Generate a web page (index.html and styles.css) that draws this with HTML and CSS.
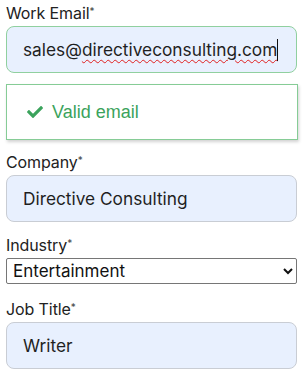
FILE: index.html
```html
<!DOCTYPE html>
<html lang="en">
<head>
<meta charset="utf-8">
<link rel="stylesheet" href="styles.css">
</head>
<body>
<form class="form">
  <div class="field field-first">
    <div class="label">Work Email<span class="req">*</span></div>
    <div class="input input-valid">sales@<span class="misspelled">directiveconsulting.com</span><span class="caret"></span></div>
    <div class="valid-box">
      <svg class="check" viewBox="0 64 512 384" width="16" height="12" aria-hidden="true"><path d="M173.898 439.404l-166.4-166.4c-9.997-9.997-9.997-26.206 0-36.204l36.203-36.204c9.997-9.998 26.207-9.998 36.204 0L192 312.69 432.095 72.596c9.997-9.997 26.207-9.997 36.204 0l36.203 36.204c9.997 9.997 9.997 26.206 0 36.204l-294.4 294.401c-9.998 9.997-26.207 9.997-36.204-.001z" fill="#3ba35c"/></svg>
      <span class="valid-text">Valid email</span>
    </div>
  </div>
  <div class="field">
    <div class="label">Company<span class="req">*</span></div>
    <div class="input">Directive Consulting</div>
  </div>
  <div class="field field-select">
    <div class="label">Industry<span class="req">*</span></div>
    <select class="select"><option>Entertainment</option></select>
  </div>
  <div class="field field-job">
    <div class="label">Job Title<span class="req">*</span></div>
    <div class="input">Writer</div>
  </div>
</form>
</body>
</html>
```

FILE: styles.css
```css
html, body {
  margin: 0;
  padding: 0;
  background: #ffffff;
}
.form {
  display: flex;
  flex-direction: column;
  padding: 3px 9px 0 6px;
  font-family: Inter, "Liberation Sans", sans-serif;
  color: #1f1f1f;
}
.field {
  display: flex;
  flex-direction: column;
  margin-top: 12px;
}
.field-first { margin-top: 0; }
.field-select { margin-top: 13px; }
.field-job { margin-top: 15px; }
.label {
  font-size: 16px;
  line-height: 20px;
  height: 20px;
  margin-bottom: 3px;
  color: #222;
  letter-spacing: -0.1px;
}
.req {
  font-size: 10px;
  line-height: 10px;
  vertical-align: top;
  position: relative;
  top: 3px;
  color: #444;
}
.input {
  box-sizing: border-box;
  height: 47px;
  background: #e8f0fe;
  border: 1px solid #c9cdd4;
  border-radius: 8px;
  padding: 0 16px;
  display: flex;
  align-items: center;
  font-size: 17.3px;
  color: #1f1f1f;
  white-space: nowrap;
}
.input-valid {
  border-color: #90d09f;
}
.misspelled {
  text-decoration: underline wavy #e02020;
  text-decoration-thickness: 1px;
  text-underline-offset: 3px;
}
.caret {
  display: inline-block;
  width: 1px;
  height: 22px;
  background: #111;
}
.valid-box {
  box-sizing: border-box;
  margin-top: 11px;
  height: 56px;
  width: 292px;
  border: 1px solid #86cc96;
  background: #fff;
  box-shadow: 1px 2px 3px rgba(0,0,0,0.18);
  display: flex;
  align-items: center;
  padding-left: 20px;
  gap: 9px;
}
.check { flex: none; }
.valid-text {
  font-family: "Liberation Sans", Arial, sans-serif;
  font-size: 18px;
  color: #3ba35c;
}
.select {
  box-sizing: border-box;
  width: 291px;
  height: 26px;
  font-family: Inter, "Liberation Sans", sans-serif;
  font-size: 17px;
  color: #111;
  border: 1px solid #767676;
  border-radius: 2px;
  background: #fff;
  padding: 0 2px;
  margin: 0;
}
```
